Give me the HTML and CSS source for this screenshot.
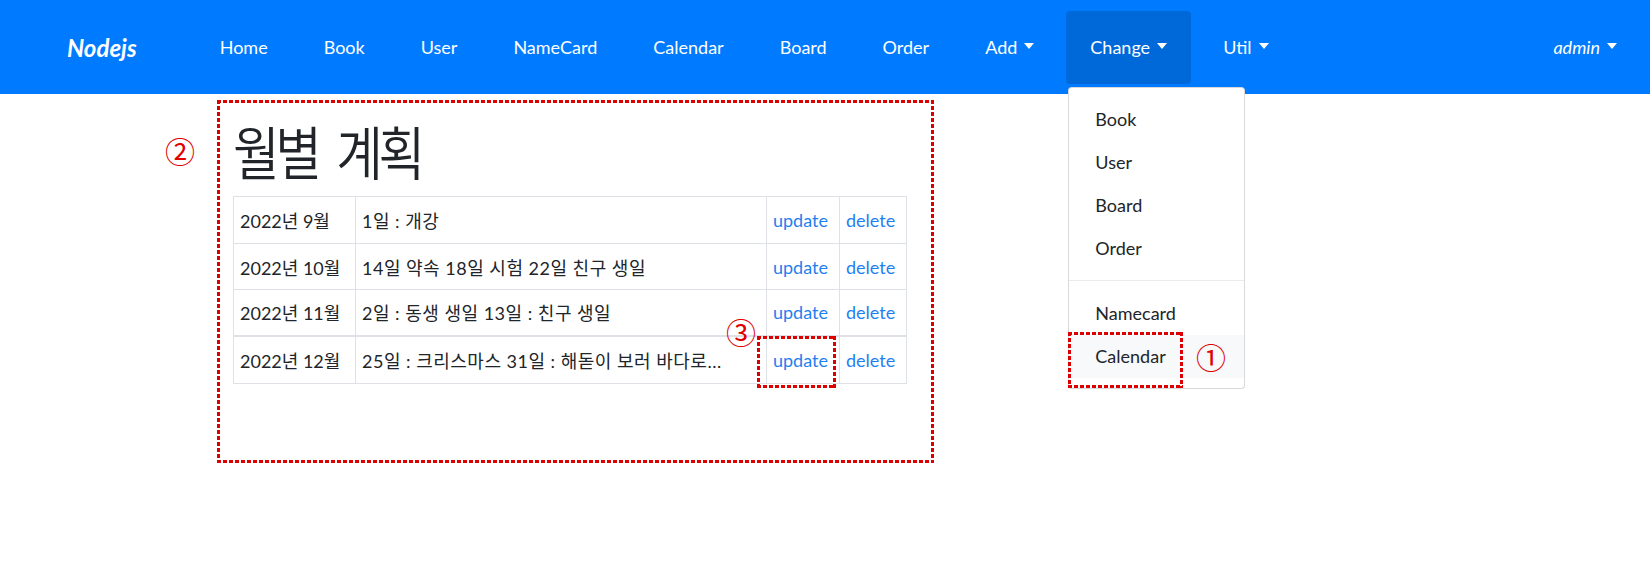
FILE: index.html
```html
<!DOCTYPE html>
<html lang="ko">
<head>
<meta charset="utf-8">
<title>월별 계획</title>
<link rel="stylesheet" href="styles.css">
</head>
<body>
<nav class="navbar">
  <a class="brand" href="#">Nodejs</a>
  <ul class="nav">
    <li class="nav-item"><a class="nav-link" href="#">Home</a></li>
    <li class="nav-item"><a class="nav-link" href="#">Book</a></li>
    <li class="nav-item"><a class="nav-link" href="#">User</a></li>
    <li class="nav-item"><a class="nav-link" href="#">NameCard</a></li>
    <li class="nav-item"><a class="nav-link" href="#">Calendar</a></li>
    <li class="nav-item"><a class="nav-link" href="#">Board</a></li>
    <li class="nav-item"><a class="nav-link" href="#">Order</a></li>
    <li class="nav-item"><a class="nav-link" href="#">Add<span class="caret"></span></a></li>
    <li class="nav-item dropdown">
      <a class="nav-link active" href="#">Change<span class="caret"></span></a>
      <div class="dropdown-menu">
        <a class="dropdown-item" href="#">Book</a>
        <a class="dropdown-item" href="#">User</a>
        <a class="dropdown-item" href="#">Board</a>
        <a class="dropdown-item" href="#">Order</a>
        <div class="dropdown-divider"></div>
        <a class="dropdown-item" href="#">Namecard</a>
        <a class="dropdown-item hovered" href="#">Calendar</a>
      </div>
    </li>
    <li class="nav-item"><a class="nav-link" href="#">Util<span class="caret"></span></a></li>
  </ul>
  <a class="nav-link user" href="#">admin<span class="caret"></span></a>
</nav>

<main class="content">
  <h1 class="title">월별 계획</h1>
  <table class="plan">
    <colgroup>
      <col class="c-month"><col class="c-text"><col class="c-upd"><col class="c-del">
    </colgroup>
    <tbody>
      <tr class="first"><td>2022년 9월</td><td class="desc">1일 : 개강</td><td><a href="#">update</a></td><td><a href="#">delete</a></td></tr>
      <tr><td>2022년 10월</td><td class="desc">14일 약속 18일 시험 22일 친구 생일</td><td><a href="#">update</a></td><td><a href="#">delete</a></td></tr>
      <tr><td>2022년 11월</td><td class="desc">2일 : 동생 생일 13일 : 친구 생일</td><td><a href="#">update</a></td><td><a href="#">delete</a></td></tr>
    </tbody>
    <tbody class="last">
      <tr><td>2022년 12월</td><td class="desc">25일 : 크리스마스 31일 : 해돋이 보러 바다로...</td><td><a href="#">update</a></td><td><a href="#">delete</a></td></tr>
    </tbody>
  </table>
</main>

<div class="mark box-main"></div>
<div class="mark box-update"></div>
<div class="mark box-menu"></div>
<span class="num num-1">①</span>
<span class="num num-2">②</span>
<span class="num num-3">③</span>
</body>
</html>
```

FILE: styles.css
```css
* { box-sizing: border-box; }
html, body { margin: 0; padding: 0; background: #fff; }
body {
  font-family: "Lato", "Noto Sans CJK KR", sans-serif;
  font-size: 18px;
  color: #212529;
  width: 1650px;
  height: 586px;
  overflow: hidden;
  position: relative;
}
a { text-decoration: none; }

.navbar {
  display: flex;
  align-items: center;
  height: 94px;
  padding: 0 9px 0 67px;
  background: #007bff;
}
.brand {
  color: #fff;
  font-weight: 700;
  font-style: italic;
  font-size: 24px;
  margin-right: 59px;
}
.nav {
  display: flex;
  list-style: none;
  margin: 0;
  padding: 0;
  flex: 1;
}
.nav-item { position: relative; margin-right: 8px; }
.nav-link {
  display: flex;
  align-items: center;
  height: 73px;
  padding: 0 24px;
  color: #fff;
  border-radius: 4px;
}
.nav-link.active { background: #0069d9; }
.user { font-style: italic; font-weight: 400; }
.caret {
  display: inline-block;
  width: 0; height: 0;
  margin-left: 7px;
  margin-top: -2px;
  border-top: 6px solid #fff;
  border-left: 5px solid transparent;
  border-right: 5px solid transparent;
}

.dropdown-menu {
  position: absolute;
  top: 76px;
  left: 2px;
  width: 177px;
  padding: 10px 0;
  background: #fff;
  border: 1px solid rgba(0,0,0,.15);
  border-radius: 4px;
  z-index: 5;
}
.dropdown-item {
  display: flex;
  align-items: center;
  height: 43px;
  padding: 0 26px;
  color: #212529;
}
.dropdown-item.hovered { background: #f8f9fa; }
.dropdown-divider {
  margin: 10px 0 11px;
  border-top: 1px solid #e9ecef;
}

.content { padding: 0 0 0 233px; }
.title {
  margin: 0;
  padding-top: 16px;
  height: 102px;
  font-family: "Noto Sans CJK KR", sans-serif;
  font-size: 58px;
  font-weight: 350;
  line-height: 80px;
  letter-spacing: -5px;
  word-spacing: 10px;
  transform: scaleX(0.875);
  transform-origin: left center;
}
.plan {
  border-collapse: collapse;
  table-layout: fixed;
  width: 674px;
  font-size: 18px;
}
.c-month { width: 122px; }
.c-text { width: 411px; }
.c-upd { width: 73px; }
.c-del { width: 67px; }
.plan td {
  border: 1px solid #dee2e6;
  height: 46px;
  padding: 0 6px;
  white-space: nowrap;
  overflow: hidden;
}
.plan tr.first td { height: 47px; }
.plan td.desc { letter-spacing: 0.5px; }
.plan tbody.last td { border-top: 2px solid #dee2e6; height: 48px; }
.plan a { color: #1f7ff0; }

.mark {
  position: absolute;
  z-index: 10;
  --dash: #dc0000;
  background:
    repeating-linear-gradient(90deg, var(--dash) 0 4px, transparent 4px 6px) top / 100% 3px no-repeat,
    repeating-linear-gradient(90deg, var(--dash) 0 4px, transparent 4px 6px) bottom / 100% 3px no-repeat,
    repeating-linear-gradient(180deg, var(--dash) 0 4px, transparent 4px 6px) left / 3px 100% no-repeat,
    repeating-linear-gradient(180deg, var(--dash) 0 4px, transparent 4px 6px) right / 3px 100% no-repeat;
  pointer-events: none;
}
.box-main { left: 217px; top: 100px; width: 717px; height: 363px; }
.box-update { left: 757px; top: 336px; width: 79px; height: 52px; }
.box-menu { left: 1068px; top: 332px; width: 115px; height: 56px; }

.num {
  position: absolute;
  z-index: 10;
  color: #e00000;
  font-family: "Noto Sans CJK KR", sans-serif;
  font-size: 30px;
  line-height: 1;
}
.num-1 { left: 1196px; top: 341px; }
.num-2 { left: 165px; top: 135px; }
.num-3 { left: 726px; top: 316px; }
```
